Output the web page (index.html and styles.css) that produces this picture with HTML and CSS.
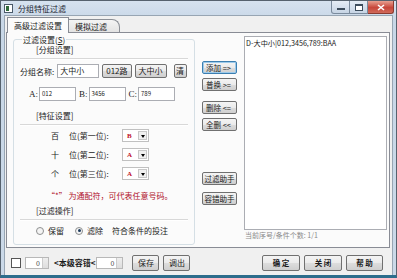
FILE: index.html
```html
<!DOCTYPE html>
<html>
<head>
<meta charset="utf-8">
<link rel="stylesheet" href="styles.css">
</head>
<body>
<div class="window">
  <div class="titlebar">
    <div class="appicon"><svg width="9" height="9" viewBox="0 0 9 9"><rect x="0.5" y="0.5" width="8" height="8" fill="#fff" stroke="#4a5a6a"/><rect x="2" y="2" width="3" height="5" fill="#2f6b3a"/></svg></div>
    <div class="title">分组特征过滤</div>
    <div class="caption-btns">
      <div class="cbtn min"><span class="minbar"></span></div>
      <div class="cbtn max"><span class="maxbox"></span></div>
      <div class="cbtn close"><svg width="8" height="7" viewBox="0 0 8 7"><path d="M1 1 L7 6 M7 1 L1 6" stroke="#fff" stroke-width="1.6"/></svg></div>
    </div>
  </div>
  <div class="client">
    <div class="tabs">
      <div class="tab active">高级过滤设置</div>
      <div class="tab">模拟过滤</div>
    </div>
    <div class="panel">
      <fieldset class="group">
        <legend>过滤设置(<u>S</u>)</legend>
        <div class="section">[分组设置]</div>
        <div class="sep"></div>
        <div class="row name-row">
          <span class="lbl">分组名称:</span>
          <div class="input w42">大中小</div>
          <div class="btn">012路</div>
          <div class="btn">大中小</div>
          <div class="btn narrow">清</div>
        </div>
        <div class="row abc-row">
          <span class="lbl ser">A:</span><div class="input w37 small">012</div>
          <span class="lbl ser">B:</span><div class="input w37 small">3456</div>
          <span class="lbl ser">C:</span><div class="input w37 small">789</div>
        </div>
        <div class="section sec2">[特征设置]</div>
        <div class="sep"></div>
        <div class="pos-row first"><span class="digit">百</span><span class="pos">位(第一位):</span><div class="select"><span class="val">B</span><span class="arrow"></span></div></div>
        <div class="pos-row"><span class="digit">十</span><span class="pos">位(第二位):</span><div class="select"><span class="val">A</span><span class="arrow"></span></div></div>
        <div class="pos-row"><span class="digit">个</span><span class="pos">位(第三位):</span><div class="select"><span class="val">A</span><span class="arrow"></span></div></div>
        <div class="note">“*” 为通配符，可代表任意号码。</div>
        <div class="section sec3">[过滤操作]</div>
        <div class="sep"></div>
        <div class="radio-row">
          <span class="radio"></span><span class="rlbl">保留</span>
          <span class="radio on"></span><span class="rlbl">滤除</span>
          <span class="rlbl extra">符合条件的投注</span>
        </div>
      </fieldset>
      <div class="midcol">
        <div class="btn mb focus">添加 =&gt;</div>
        <div class="btn mb">普换 &gt;=</div>
        <div class="btn mb gap1">删除 &lt;=</div>
        <div class="btn mb">全删 &lt;&lt;</div>
        <div class="btn mb gap2">过滤助手</div>
        <div class="btn mb">容错助手</div>
      </div>
      <div class="rightcol">
        <div class="listbox"><div class="item">D-大中小|012,3456,789:BAA</div></div>
        <div class="status">当前序号/条件个数: 1/1</div>
      </div>
    </div>
    <div class="bottom">
      <span class="check"></span>
      <div class="spin"><span class="sv">0</span><span class="sarr"></span></div>
      <span class="tol">&lt;本级容错&lt;</span>
      <div class="spin"><span class="sv">0</span><span class="sarr"></span></div>
      <div class="btn bb b1">保存</div>
      <div class="btn bb">调出</div>
      <div class="spacer"></div>
      <div class="btn big">确 定</div>
      <div class="btn big">关 闭</div>
      <div class="btn big">帮 助</div>
    </div>
  </div>
</div>
</body>
</html>
```
FILE: styles.css
```css
* { box-sizing: border-box; }
html, body { margin: 0; padding: 0; }
body {
  width: 397px; height: 278px; overflow: hidden;
  font-family: "Noto Sans CJK SC", "Liberation Sans", sans-serif;
  font-size: 8px; color: #1a1a1a;
}
.window {
  width: 397px; height: 278px;
  display: flex; flex-direction: column;
  background: linear-gradient(#d6e2ef, #c8d7e7 20px, #cbd9e8);
  border: 1px solid #56626e;
  border-bottom: 3px solid #2d6d8c;
}
.titlebar {
  height: 16px; display: flex; align-items: center; padding-left: 3px;
}
.appicon { width: 10px; height: 10px; display: flex; align-items: center; }
.title { margin-left: 4px; font-size: 8px; color: #1b2430; }
.caption-btns { margin-left: auto; display: flex; align-self: flex-start; margin-right: 2px; }
.cbtn { height: 13px; display: flex; align-items: center; justify-content: center; border: 1px solid #7a8a9c; border-top: none; }
.cbtn.min { width: 19px; border-radius: 0 0 0 3px; background: linear-gradient(#e4ecf5, #c6d4e4); }
.cbtn.max { width: 18px; border-left: none; background: linear-gradient(#e4ecf5, #c6d4e4); }
.cbtn.close { width: 26px; border-left: none; border-radius: 0 0 3px 0; background: linear-gradient(#e8a090, #c7463a 55%, #d06a5a); border-color: #8a3a30; }
.minbar { width: 8px; height: 2px; background: #fff; border: 1px solid #3c4c5c; margin-top: 4px; }
.maxbox { width: 8px; height: 7px; border: 1px solid #3c4c5c; border-top-width: 2px; background: #fff; }
.client {
  flex: 1; margin: 0 3px 0 3px; background: #f0f0f0;
  display: flex; flex-direction: column; padding: 1px 2px 0 1px;
  border: 1px solid #97a5b3; border-bottom: none;
}
.tabs { display: flex; height: 15px; padding-left: 1px; position: relative; z-index: 1; }
.tab {
  border: 1px solid #8b8f96; border-bottom: none;
  padding: 0 6px; line-height: 13px; background: linear-gradient(#f4f4f4, #e3e3e3);
  margin-top: 2px; height: 13px; font-size: 8px;
}
.tab.active { background: #fbfbfb; margin-top: 0; height: 16px; line-height: 15px; padding: 0 6px; border-color: #898c95; }
.tab + .tab { border-left: none; border-radius: 0 8px 0 0; padding-right: 12px; }
.panel {
  height: 216px; border: 1px solid #898c95; background: #fbfbfb;
  display: flex; padding: 2px 0 0 6px;
}
.group {
  width: 182px; height: 210px; margin: 0; padding: 0 0 0 6px;
  border: 1px solid #d5dfe5; border-radius: 3px;
}
.group legend { padding: 0 1px; margin-left: 2px; font-size: 8px; line-height: 9px; color: #1a1a1a; }
.section { padding-left: 16px; line-height: 10px; margin-top: 1px; }
.sep { height: 2px; border-top: 1px solid #d8d8d8; border-bottom: 1px solid #fff; margin: 3px 6px 0 0; }
.row { display: flex; align-items: center; }
.name-row { margin-top: 4px; gap: 3px; }
.input {
  height: 14px; border: 1px solid #abadb3; background: #fff; line-height: 12px;
  padding-left: 2px; font-size: 8px;
}
.input.small { font-size: 6px; }
.w42 { width: 42px; }
.w37 { width: 37px; }
.btn {
  height: 14px; border: 1px solid #707070; border-radius: 2px;
  background: linear-gradient(#f4f4f4, #ebebeb 50%, #dddddd 51%, #cfcfcf);
  display: flex; align-items: center; justify-content: center; padding: 0 2px;
  font-size: 8px; line-height: 1; white-space: nowrap;
}
.name-row .btn { padding: 0 3px; }
.name-row .btn.narrow { margin-left: 4px; width: 13px; padding: 0; }
.abc-row { margin-top: 9px; padding-left: 7px; gap: 1px; }
.lbl.ser { font-family: "Liberation Serif", serif; font-size: 9px; margin-left: 2px; }
.sec2 { margin-top: 10px; }
.pos-row { display: flex; align-items: center; height: 13px; margin-top: 6px; padding-left: 31px; }
.pos-row.first { margin-top: 3px; }
.digit { width: 18px; }
.pos { width: 53px; }
.select {
  width: 27px; height: 13px; border: 1px solid #c0c0c0; background: #fff;
  display: flex; align-items: center; justify-content: space-between; padding: 0 1px 0 4px;
}
.val { color: #c0102a; font-family: "Liberation Serif", serif; font-weight: bold; font-size: 7px; }
.arrow { width: 9px; height: 9px; border: 1px solid #c8c8c8; background: #f0f0f0; position: relative; }
.arrow::after { content: ""; position: absolute; left: 2px; top: 3px; border: 2px solid transparent; border-top: 3px solid #000; border-bottom: none; }
.note { color: #b0102a; margin-top: 11px; padding-left: 27px; font-size: 8px; line-height: 10px; }
.sec3 { margin-top: 5px; }
.radio-row { display: flex; align-items: center; margin-top: 4px; padding-left: 16px; height: 11px; }
.radio { width: 8px; height: 8px; border-radius: 50%; border: 1px solid #8e8f8f; background: #f4f4f4; margin-right: 4px; position: relative; }
.radio.on::after { content: ""; position: absolute; left: 1.5px; top: 1.5px; width: 3px; height: 3px; border-radius: 50%; background: #1d3b5e; }
.rlbl { margin-right: 11px; }
.rlbl.extra { margin-left: -2px; }
.midcol { width: 36px; margin-left: 7px; display: flex; flex-direction: column; padding-top: 26px; }
.btn.mb { height: 13px; width: 35px; margin-bottom: 4px; font-size: 7.5px; justify-content: flex-start; padding-left: 3px; }
.btn.mb.focus { border-color: #3c7fb1; box-shadow: inset 0 0 0 1px #9ecbeb; }
.gap1 { margin-top: 6px; }
.gap2 { margin-top: 37px; }
.btn.mb.gap2, .btn.mb.gap2 + .btn { justify-content: center; padding: 0; margin-bottom: 7px; }
.rightcol { margin-left: 6px; width: 143px; display: flex; flex-direction: column; padding-top: 1px; }
.listbox { height: 194px; background: #fff; border: 1px solid #abadb3; padding: 2px 1px; }
.item { font-size: 7.2px; line-height: 9px; white-space: nowrap; }
.status { color: #8a8a8a; font-size: 7px; line-height: 10px; padding-left: 1px; margin-top: 0; }
.bottom { display: flex; align-items: center; height: 27px; padding: 2px 0 0 5px; }
.check { width: 10px; height: 10px; border: 1px solid #555; background: #fff; margin-right: 4px; }
.spin { width: 24px; height: 12px; border: 1px solid #b8b8b8; background: #fff; display: flex; align-items: center; justify-content: flex-end; }
.spin + .tol + .spin { width: 27px; }
.sv { font-size: 7px; color: #444; margin-right: 2px; }
.sarr { width: 6px; height: 10px; border-left: 1px solid #ccc; background: linear-gradient(#eee, #ddd); }
.tol { font-weight: bold; font-size: 8px; margin: 0 1px 0 5px; }
.btn.bb { height: 16px; width: 27px; margin-left: 4px; }
.btn.b1 { margin-left: 9px; }
.spacer { flex: 1; }
.btn.big { height: 16px; width: 38px; margin-left: 4px; font-weight: bold; font-size: 7.5px; }
.btn.big:last-child { margin-right: 7px; width: 37px; }
```
